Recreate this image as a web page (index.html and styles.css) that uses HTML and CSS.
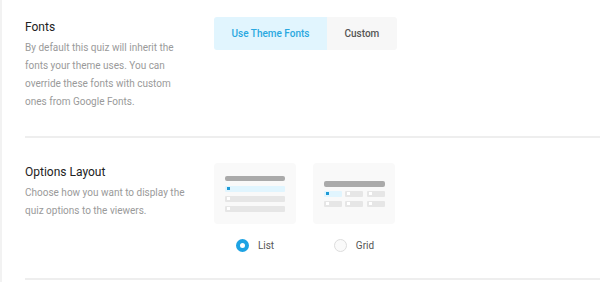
FILE: index.html
```html
<!DOCTYPE html>
<html lang="en">
<head>
    <meta charset="UTF-8">
    <meta name="viewport" content="width=device-width, initial-scale=1.0">
    <title>Quiz Settings</title>
    <link rel="stylesheet" href="styles.css">
</head>
<body>

    <div class="settings-panel">
        <!-- Fonts -->
        <div class="setting-row row-fonts">
            <div class="setting-info">
                <h3>Fonts</h3>
                <p>By default this quiz will inherit the fonts your theme uses. You can override these fonts with custom ones from Google Fonts.</p>
            </div>
            <div class="setting-control">
                <div class="toggle-group">
                    <button type="button" class="toggle-btn active">Use Theme Fonts</button>
                    <button type="button" class="toggle-btn">Custom</button>
                </div>
            </div>
        </div>

        <!-- Options Layout -->
        <div class="setting-row row-layout">
            <div class="setting-info">
                <h3>Options Layout</h3>
                <p>Choose how you want to display the quiz options to the viewers.</p>
            </div>
            <div class="setting-control layout-choices">
                <label class="layout-option">
                    <div class="layout-card">
                        <div class="preview-list">
                            <span class="bar-head"></span>
                            <span class="cell selected"><i></i></span>
                            <span class="cell"><i></i></span>
                            <span class="cell"><i></i></span>
                        </div>
                    </div>
                    <span class="radio-line">
                        <input type="radio" name="layout" value="list" checked>
                        <span class="radio-mark"></span>
                        List
                    </span>
                </label>

                <label class="layout-option">
                    <div class="layout-card">
                        <div class="preview-grid">
                            <span class="bar-head"></span>
                            <div class="grid-cells">
                                <span class="cell selected"><i></i></span>
                                <span class="cell"><i></i></span>
                                <span class="cell"><i></i></span>
                                <span class="cell"><i></i></span>
                                <span class="cell"><i></i></span>
                                <span class="cell"><i></i></span>
                            </div>
                        </div>
                    </div>
                    <span class="radio-line">
                        <input type="radio" name="layout" value="grid">
                        <span class="radio-mark"></span>
                        Grid
                    </span>
                </label>
            </div>
        </div>
    </div>

</body>
</html>
```

FILE: styles.css
```css
body {
    margin: 0;
    font-family: Roboto, "Liberation Sans", Arial, sans-serif;
    background-color: #fff;
}

.settings-panel {
    border-left: 2px solid #f2f2f2;
    min-height: 282px;
}

/* Setting rows */
.setting-row {
    display: flex;
    margin-left: 23px;
    border-bottom: 2px solid #eeeeee;
}

.row-fonts {
    padding: 17px 0 25px;
}

.row-layout {
    padding: 25px 0 26px;
}

.setting-info {
    width: 165px;
    margin-right: 24px;
}

.setting-info h3 {
    margin: 1px 0 3px;
    font-size: 12px;
    line-height: 18px;
    font-weight: 400;
    color: #222;
}

.row-layout .setting-info h3 {
    margin-top: 0;
}

.setting-info p {
    margin: 0;
    font-size: 10px;
    line-height: 18px;
    color: #9a9a9a;
}

/* Toggle buttons */
.toggle-group {
    display: flex;
}

.toggle-btn {
    height: 33px;
    padding: 0 17.5px;
    border: none;
    font-family: inherit;
    font-size: 10px;
    font-weight: 500;
    background-color: #f7f7f7;
    color: #555;
    cursor: pointer;
}

.toggle-btn:first-child {
    border-radius: 3px 0 0 3px;
}

.toggle-btn:last-child {
    border-radius: 0 3px 3px 0;
}

.toggle-btn.active {
    background-color: #e1f5fe;
    color: #2aa8e0;
}

/* Layout choices */
.layout-choices {
    display: flex;
    gap: 17px;
}

.layout-option {
    display: flex;
    flex-direction: column;
    align-items: center;
    cursor: pointer;
}

.layout-card {
    width: 82px;
    height: 61px;
    display: flex;
    align-items: center;
    justify-content: center;
    background-color: #f9f9f9;
    border-radius: 4px;
}

.bar-head {
    display: block;
    height: 6px;
    background-color: #aaaaaa;
    border-radius: 2px;
}

.cell {
    display: flex;
    align-items: center;
    height: 6px;
    background-color: #e6e6e6;
    border-radius: 1px;
}

.cell i {
    width: 3px;
    height: 3px;
    margin-left: 2px;
    background-color: #fff;
}

.cell.selected {
    background-color: #e1f5fe;
}

.cell.selected i {
    background-color: #1e9ad6;
}

.preview-list {
    width: 60px;
    display: flex;
    flex-direction: column;
    gap: 4px;
}

.preview-list .bar-head {
    height: 5px;
    margin-bottom: 1px;
}

.preview-grid {
    width: 61px;
}

.grid-cells {
    display: grid;
    grid-template-columns: repeat(3, 1fr);
    gap: 4px 3.5px;
    margin-top: 4px;
}

/* Radios */
.radio-line {
    display: flex;
    align-items: center;
    margin-top: 15px;
    font-size: 10px;
    color: #555;
}

.radio-line input {
    display: none;
}

.radio-mark {
    width: 13px;
    height: 13px;
    box-sizing: border-box;
    margin-right: 9px;
    border: 1px solid #dddddd;
    border-radius: 50%;
    background-color: #fafafa;
}

.radio-line input:checked + .radio-mark {
    border: 4px solid #1ea3e3;
    background-color: #fff;
}
```
